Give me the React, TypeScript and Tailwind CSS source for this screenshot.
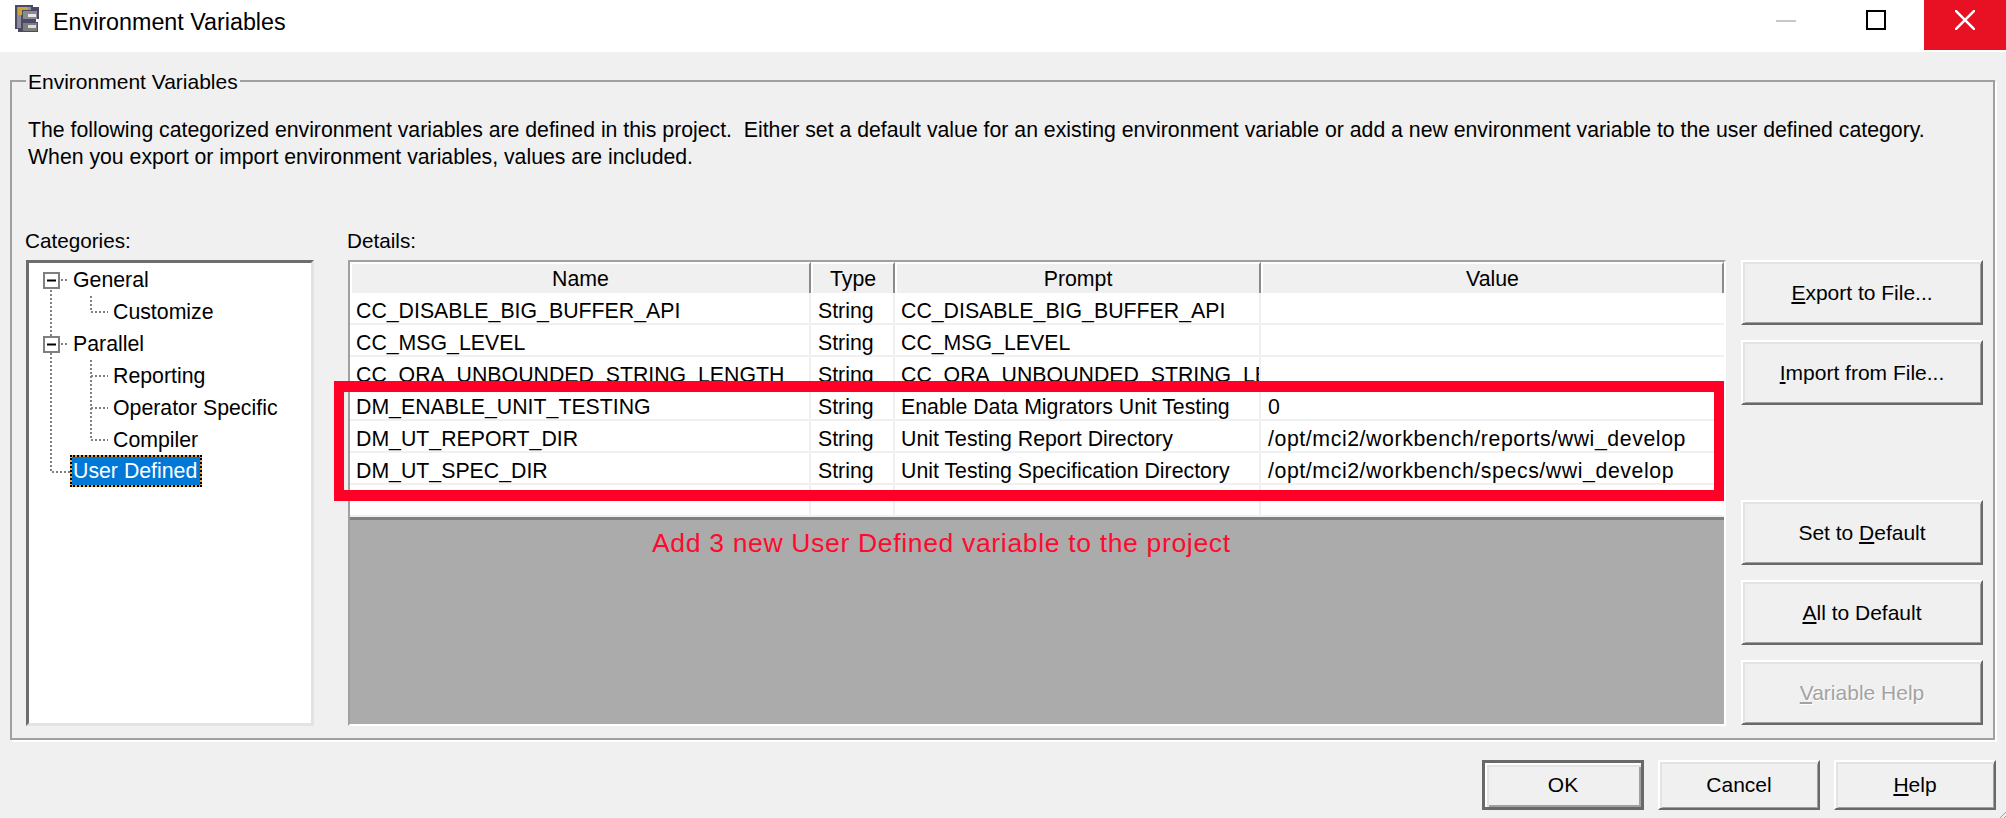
import React from "react";

const font = "font-['Liberation_Sans',Arial,sans-serif] text-[21.3px] text-black";

const rows = [
  ["CC_DISABLE_BIG_BUFFER_API", "String", "CC_DISABLE_BIG_BUFFER_API", ""],
  ["CC_MSG_LEVEL", "String", "CC_MSG_LEVEL", ""],
  ["CC_ORA_UNBOUNDED_STRING_LENGTH", "String", "CC_ORA_UNBOUNDED_STRING_LENGTH", ""],
  ["DM_ENABLE_UNIT_TESTING", "String", "Enable Data Migrators Unit Testing", "0"],
  ["DM_UT_REPORT_DIR", "String", "Unit Testing Report Directory", "/opt/mci2/workbench/reports/wwi_develop"],
  ["DM_UT_SPEC_DIR", "String", "Unit Testing Specification Directory", "/opt/mci2/workbench/specs/wwi_develop"],
  ["", "", "", ""],
];

const treeItems = [
  { label: "General", indent: "ml-[44px]" },
  { label: "Customize", indent: "ml-[84px]" },
  { label: "Parallel", indent: "ml-[44px]" },
  { label: "Reporting", indent: "ml-[84px]" },
  { label: "Operator Specific", indent: "ml-[84px]" },
  { label: "Compiler", indent: "ml-[84px]" },
];

function Btn({
  children,
  className = "",
  disabled = false,
  isDefault = false,
}: {
  children: React.ReactNode;
  className?: string;
  disabled?: boolean;
  isDefault?: boolean;
}) {
  const edge = isDefault
    ? "border-[3px] border-[#696969] shadow-[inset_2px_2px_0_#ffffff,inset_4px_4px_0_#e3e3e3,inset_-2px_-2px_0_#a0a0a0]"
    : "border-2 border-t-white border-l-white border-r-[#696969] border-b-[#696969] shadow-[inset_2px_2px_0_#e3e3e3,inset_-1px_-1px_0_#a0a0a0]";
  const text = disabled ? "text-[#a3a3a3] [text-shadow:1px_1px_0_#ffffff]" : "text-black";
  return (
    <button
      disabled={disabled}
      className={`flex items-center justify-center bg-[#f0f0f0] font-['Liberation_Sans',Arial,sans-serif] text-[21px] ${edge} ${text} ${className}`}
    >
      {children}
    </button>
  );
}

function AppIcon() {
  return (
    <svg width="28" height="32" viewBox="0 0 28 32" className="ml-[13px] mt-[3px]">
      <path d="M2 2h18v2h6v12h-3v3h2v10H5v-3H2z" fill="#4a4a68" />
      <path d="M4 4h14v3H8v18H4z" fill="#8d8d9a" />
      <path d="M5 4h10v3H9v5H5z" fill="#c9a63a" />
      <path d="M10 8h14v8H10z" fill="#8b8b8b" />
      <path d="M15 11h8v3h-8z" fill="#e8e8e8" />
      <path d="M10 20h14v8H10z" fill="#7d7d7d" />
      <path d="M15 22h8v3h-8z" fill="#dcdcdc" />
    </svg>
  );
}

function TreeLines() {
  const dot = { stroke: "#808080", strokeWidth: 2, strokeDasharray: "2 2", fill: "none" };
  return (
    <svg width="120" height="240" className="absolute left-0 top-0">
      <path d="M22 27V73M22 90V209H41" {...dot} />
      <path d="M32 17H40M32 81H40" {...dot} />
      <path d="M62 33V49H79" {...dot} />
      <path d="M62 97V177H79M62 113H79M62 145H79" {...dot} />
      <g fill="#ffffff" stroke="#808080" strokeWidth="2">
        <rect x="15" y="10" width="15" height="15" />
        <rect x="15" y="74" width="15" height="15" />
      </g>
      <path d="M18 17.5H27M18 81.5H27" stroke="#000000" strokeWidth="2" />
    </svg>
  );
}

export default function App() {
  return (
    <div className={`relative flex h-[818px] w-[2006px] flex-col overflow-hidden bg-[#f0f0f0] ${font}`}>
      {/* Title bar */}
      <div className="flex h-[52px] items-start bg-white">
        <AppIcon />
        <span className="ml-[12px] mt-[8px] text-[23.3px] leading-[28px]">Environment Variables</span>
        <div className="ml-auto flex h-[50px] items-start">
          <div className="mr-[70px] mt-[20px] h-[2px] w-[20px] bg-[#c8c8c8]" />
          <div className="mr-[38px] mt-[10px] h-[20px] w-[20px] border-2 border-black" />
          <div className="flex h-[50px] w-[82px] items-center justify-center bg-[#e81123] pb-[10px]">
            <svg width="20" height="20" viewBox="0 0 20 20">
              <path d="M0 0L20 20M20 0L0 20" stroke="#ffffff" strokeWidth="2.5" />
            </svg>
          </div>
        </div>
      </div>

      {/* Group box */}
      <fieldset className="ml-[10px] mt-[15px] h-[673px] w-[1985px] border-2 border-[#a0a0a0] shadow-[2px_2px_0_#ffffff]">
        <legend className="ml-[14px] h-[28px] px-[2px] pt-px text-[21px] leading-[28px]">Environment Variables</legend>
        <div className="flex flex-col pl-[13px]">
          <p className="ml-[3px] mt-[22px] h-[111px] text-[21.25px] leading-[27px]">
            The following categorized environment variables are defined in this project.&nbsp; Either set a default value for an existing environment variable or add a new environment variable to the user defined category.
            <br />
            When you export or import environment variables, values are included.
          </p>
          <div className="flex">
            {/* Categories */}
            <div className="w-[323px]">
              <div className="h-[32px] text-[20.7px] leading-[26px]">Categories:</div>
              <div className="relative ml-px h-[466px] w-[288px] border-[3px] border-[#6d6d6d] border-r-[#e3e3e3] border-b-[#e3e3e3] bg-white">
                <TreeLines />
                <div className="relative flex flex-col">
                  {treeItems.map((item) => (
                    <div key={item.label} className={`h-[32px] pt-px leading-[32px] ${item.indent}`}>
                      {item.label}
                    </div>
                  ))}
                  <div className="ml-[41px] h-[32px] w-[132px] bg-[#f5a13a]">
                    <div className="h-[32px] border-2 border-dotted border-black bg-[#0078d7] bg-clip-padding pl-[1px] leading-[28px] text-white">
                      User Defined
                    </div>
                  </div>
                </div>
              </div>
            </div>

            {/* Details */}
            <div className="w-[1393px]">
              <div className="-ml-px h-[32px] text-[20.7px] leading-[26px]">Details:</div>
              <div className="relative flex h-[466px] w-[1378px] flex-col border-2 border-t-[#a0a0a0] border-l-[#a0a0a0] border-r-white border-b-white bg-[#ababab]">
                <div className="grid h-[31px] grid-cols-[461px_84px_366px_1fr] bg-white">
                  {["Name", "Type", "Prompt", "Value"].map((h) => (
                    <div
                      key={h}
                      className="flex items-center justify-center border-2 border-t-white border-l-white border-r-[#8a8a8a] border-b-[#6d6d6d] bg-[#f0f0f0]"
                    >
                      {h}
                    </div>
                  ))}
                </div>
                {rows.map((row, i) => (
                  <div key={i} className="grid h-[32px] grid-cols-[461px_84px_366px_1fr] border-b-2 border-[#f0f0f0] bg-white last:border-b-0">
                    <div className="overflow-hidden whitespace-nowrap border-r-2 border-[#f0f0f0] pl-[6px] leading-[36px]">{row[0]}</div>
                    <div className="overflow-hidden whitespace-nowrap border-r-2 border-[#f0f0f0] pl-[7px] leading-[36px]">{row[1]}</div>
                    <div className="overflow-hidden whitespace-nowrap border-r-2 border-[#f0f0f0] pl-[6px] leading-[36px]">{row[2]}</div>
                    <div className="overflow-hidden whitespace-nowrap pl-[7px] leading-[36px] tracking-[0.58px]">{row[3]}</div>
                  </div>
                ))}
                <div className="flex-1 border-t-[3px] border-[#808080]" />

                {/* Red annotation over the grid */}
                <div className="absolute left-[-16px] top-[119px] h-[120px] w-[1390px] border-y-[11px] border-x-[10px] border-[#ff0027]" />
                <div className="absolute left-[302px] top-[266px] text-[26.5px] leading-[30px] tracking-[0.67px] text-[#ff0a2c]">
                  Add 3 new User Defined variable to the project
                </div>
              </div>
            </div>

            {/* Side buttons */}
            <div className="flex w-[242px] flex-col gap-[15px] pt-[32px]">
              <Btn className="h-[65px]"><span><u>E</u>xport to File...</span></Btn>
              <Btn className="mb-[80px] h-[65px]"><span><u>I</u>mport from File...</span></Btn>
              <Btn className="h-[65px]"><span>Set to <u>D</u>efault</span></Btn>
              <Btn className="h-[65px]"><span><u>A</u>ll to Default</span></Btn>
              <Btn className="h-[65px]" disabled><span><u>V</u>ariable Help</span></Btn>
            </div>
          </div>
        </div>
      </fieldset>

      {/* Dialog buttons */}
      <div className="mt-[20px] flex justify-end gap-[14px] pr-[10px]">
        <Btn isDefault className="h-[50px] w-[162px]">OK</Btn>
        <Btn className="h-[50px] w-[162px]">Cancel</Btn>
        <Btn className="h-[50px] w-[162px]"><span><u>H</u>elp</span></Btn>
      </div>

      {/* Size grip */}
      <svg width="8" height="8" className="absolute bottom-0 right-0">
        <path d="M2 8L8 2M6 8L8 6" stroke="#a0a0a0" strokeWidth="1" />
      </svg>
    </div>
  );
}
